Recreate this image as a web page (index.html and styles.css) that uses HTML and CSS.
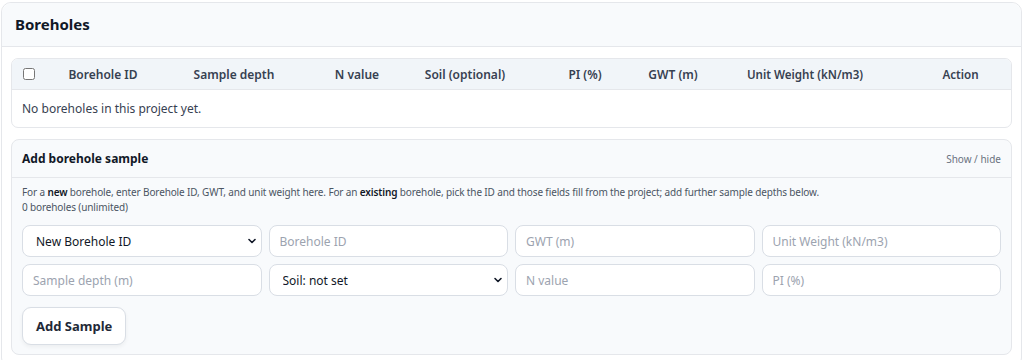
FILE: index.html
```html
<!DOCTYPE html>
<html lang="en">
<head>
    <meta charset="UTF-8">
    <meta name="viewport" content="width=device-width, initial-scale=1.0">
    <title>Boreholes</title>
    <link rel="stylesheet" href="styles.css">
</head>
<body>
    <div class="panel">
        <div class="panel-head">Boreholes</div>
        <div class="panel-body">
            <div class="table-wrap">
                <table class="bh-table">
                    <thead>
                        <tr>
                            <th class="col-check"><input type="checkbox"></th>
                            <th class="col-id">Borehole ID</th>
                            <th class="col-depth">Sample depth</th>
                            <th class="col-n">N value</th>
                            <th class="col-soil">Soil (optional)</th>
                            <th class="col-pi">PI (%)</th>
                            <th class="col-gwt">GWT (m)</th>
                            <th class="col-uw">Unit Weight (kN/m3)</th>
                            <th class="col-action">Action</th>
                        </tr>
                    </thead>
                    <tbody>
                        <tr>
                            <td colspan="9" class="empty">No boreholes in this project yet.</td>
                        </tr>
                    </tbody>
                </table>
            </div>

            <div class="add-section">
                <div class="add-head">
                    <span class="add-title">Add borehole sample</span>
                    <a class="toggle" onclick="toggleForm()">Show / hide</a>
                </div>
                <div class="add-body" id="addBody">
                    <p class="hint">For a <b>new</b> borehole, enter Borehole ID, GWT, and unit weight here. For an <b>existing</b> borehole, pick the ID and those fields fill from the project; add further sample depths below.</p>
                    <p class="hint">0 boreholes (unlimited)</p>
                    <div class="form-grid">
                        <select class="field">
                            <option>New Borehole ID</option>
                        </select>
                        <input class="field" type="text" placeholder="Borehole ID">
                        <input class="field" type="text" placeholder="GWT (m)">
                        <input class="field" type="text" placeholder="Unit Weight (kN/m3)">
                        <input class="field" type="text" placeholder="Sample depth (m)">
                        <select class="field">
                            <option>Soil: not set</option>
                        </select>
                        <input class="field" type="text" placeholder="N value">
                        <input class="field" type="text" placeholder="PI (%)">
                    </div>
                    <button class="btn">Add Sample</button>
                </div>
            </div>
        </div>
    </div>
    <script>
        function toggleForm() {
            let body = document.getElementById("addBody");
            body.style.display = body.style.display === "none" ? "block" : "none";
        }
    </script>
</body>
</html>
```

FILE: styles.css
```css
body {
    font-family: "Noto Sans", "Open Sans", sans-serif;
    margin: 0;
    padding: 2px 2px 0 1px;
    background: #fff;
    color: #1f2937;
}
.panel {
    border: 1px solid #e5e7eb;
    border-radius: 10px;
    background: #fff;
}
.panel-head {
    background: #f8fafc;
    border-bottom: 1px solid #e5e7eb;
    border-radius: 10px 10px 0 0;
    height: 43px;
    line-height: 43px;
    padding: 0 13px;
    font-size: 15px;
    font-weight: 700;
    color: #111827;
}
.panel-body {
    padding: 11px 9px 12px;
}
.table-wrap {
    border: 1px solid #e5e7eb;
    border-radius: 7px;
    overflow: hidden;
}
.bh-table {
    width: 100%;
    border-collapse: collapse;
    table-layout: fixed;
    font-size: 12px;
}
.bh-table th {
    background: #f1f5f9;
    height: 30px;
    padding: 0;
    font-weight: 600;
    color: #374151;
    text-align: center;
    border-bottom: 1px solid #e5e7eb;
}
.bh-table th input {
    margin: 0;
    width: 12px;
    height: 12px;
    vertical-align: -1px;
}
.col-check { width: 34px; }
.col-id { width: 114px; }
.col-depth { width: 148px; }
.col-n { width: 98px; }
.col-soil { width: 118px; }
.col-pi { width: 122px; }
.col-gwt { width: 54px; }
.col-uw { width: 210px; }
.bh-table th.col-uw,
.bh-table th.col-action {
    font-size: 11.6px;
}
.bh-table td.empty {
    height: 37px;
    padding: 0 10px;
    color: #374151;
}
.add-section {
    margin-top: 11px;
    border: 1px solid #e5e7eb;
    border-radius: 8px;
    background: #f8fafc;
}
.add-head {
    display: flex;
    justify-content: space-between;
    align-items: center;
    height: 37px;
    padding: 0 10px;
    border-bottom: 1px solid #e5e7eb;
}
.add-title {
    font-size: 12px;
    font-weight: 700;
    color: #111827;
}
.toggle {
    font-size: 10px;
    color: #6b7280;
    cursor: pointer;
}
.add-body {
    padding: 7px 10px 9px;
}
.hint {
    margin: 0;
    font-size: 10px;
    letter-spacing: -0.13px;
    line-height: 15px;
    color: #4b5563;
}
.hint b {
    color: #111827;
    font-weight: 600;
}
.form-grid {
    display: grid;
    grid-template-columns: repeat(4, 1fr);
    gap: 7px;
    margin-top: 10px;
}
.field {
    height: 32px;
    box-sizing: border-box;
    border: 1px solid #d9dee5;
    border-radius: 8px;
    background: #fff;
    padding: 0 10px;
    font-family: inherit;
    font-size: 12px;
    color: #111827;
    outline: none;
}
.field::placeholder {
    color: #9ca3af;
}
select.field {
    appearance: none;
    padding-left: 13px;
    background-image: url("data:image/svg+xml,%3Csvg xmlns='http://www.w3.org/2000/svg' width='10' height='10' viewBox='0 0 10 10'%3E%3Cpath d='M2 3.5l3 3 3-3' fill='none' stroke='%23111827' stroke-width='1.6' stroke-linecap='round' stroke-linejoin='round'/%3E%3C/svg%3E");
    background-repeat: no-repeat;
    background-position: right 4px center;
}
.btn {
    margin-top: 11px;
    height: 38px;
    padding: 0 13px;
    border: 1px solid #d9dee5;
    border-radius: 9px;
    background: #fff;
    box-shadow: 0 2px 4px rgba(0, 0, 0, 0.05);
    font-family: inherit;
    font-size: 13px;
    font-weight: 700;
    color: #1f2937;
    cursor: pointer;
}
```
